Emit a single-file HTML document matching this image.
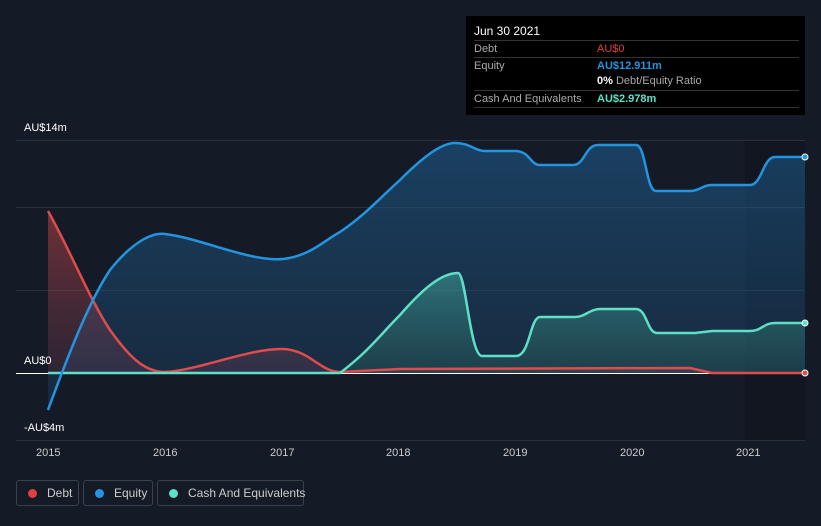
<!DOCTYPE html>
<html><head><style>
html,body{margin:0;width:821px;height:526px;overflow:hidden}
body{background:#151b26;font-family:"Liberation Sans",sans-serif;position:relative}
.t{position:absolute;font-size:11px;color:#fff}
.tip{position:absolute;left:466px;top:16px;width:339px;height:99px;background:#000;}
.tip .r{position:absolute;left:8px;right:6px;font-size:11px;color:#aaa;border-top:1px solid #333;height:16px;line-height:16px}
.leg{position:absolute;top:480px;height:26px;border:1px solid #3a404c;border-radius:3px;color:#ccc;font-size:12px;line-height:24px;box-sizing:border-box;white-space:nowrap}
.dot{display:inline-block;width:9px;height:9px;border-radius:50%;margin:0 10px 0 11px;vertical-align:-1px}
</style></head><body>
<svg width="821" height="526" style="position:absolute;left:0;top:0">
<defs>
<linearGradient id="eg" x1="0" y1="0" x2="0" y2="1"><stop offset="0" stop-color="#1e5f94" stop-opacity=".55"/><stop offset="1" stop-color="#1e4a72" stop-opacity=".3"/></linearGradient>
<linearGradient id="cg" x1="0" y1="0" x2="0" y2="1"><stop offset="0" stop-color="#4fd1b5" stop-opacity=".4"/><stop offset="1" stop-color="#2a6b64" stop-opacity=".3"/></linearGradient>
<linearGradient id="dg" x1="0" y1="0" x2="0" y2="1"><stop offset="0" stop-color="#e04b4b" stop-opacity=".45"/><stop offset="1" stop-color="#6a3a55" stop-opacity=".3"/></linearGradient>
</defs>
<rect x="745" y="140" width="60" height="300" fill="#0f141c" opacity=".6"/>
<g stroke="#2a303b" stroke-width="1">
<line x1="16" y1="140.5" x2="805" y2="140.5"/><line x1="16" y1="207.5" x2="805" y2="207.5"/><line x1="16" y1="290.5" x2="805" y2="290.5"/><line x1="16" y1="440.5" x2="805" y2="440.5"/>
</g>
<line x1="16" y1="373.5" x2="805" y2="373.5" stroke="#fff" stroke-width="1"/>
<path d="M48,410 C70,350 90,300 110,270 C130,245 150,232 165,234 C200,238 250,262 283,259 C310,256 325,240 340,232 C365,215 380,198 400,180 C420,160 440,143 455,143 C470,143 475,151 485,151 L515,151 C530,151 530,165 540,165 L573,165 C585,165 585,145 598,145 L636,145 C646,145 646,191 656,191 L690,191 C700,191 702,185 712,185 L750,185 C762,185 763,157 775,157 L805,157 L805,373 L48,373Z" fill="url(#eg)"/>
<path d="M48,211 C70,250 90,300 110,330 C130,358 145,372 165,372 C200,370 250,348 283,349 C310,350 320,372 340,372 L400,369 L690,368 L712,373 L805,373 L48,373Z" fill="url(#dg)"/>
<path d="M340,373 C370,350 380,335 400,315 C420,292 440,273 458,273 C466,273 470,356 482,356 L516,356 C530,356 530,317 540,317 L575,317 C585,317 590,309 600,309 L636,309 C647,309 647,333 657,333 L695,333 L712,331 L750,331 C762,331 763,323 775,323 L805,323 L805,373Z" fill="url(#cg)"/>
<path d="M48,211 C70,250 90,300 110,330 C130,358 145,372 165,372 C200,370 250,348 283,349 C310,350 320,372 340,372 L400,369 L690,368 L712,373 L805,373" fill="none" stroke="#e04b4b" stroke-width="2.5"/>
<path d="M48,373 L340,373 C370,350 380,335 400,315 C420,292 440,273 458,273 C466,273 470,356 482,356 L516,356 C530,356 530,317 540,317 L575,317 C585,317 590,309 600,309 L636,309 C647,309 647,333 657,333 L695,333 L712,331 L750,331 C762,331 763,323 775,323 L805,323" fill="none" stroke="#5ee0c8" stroke-width="2.5"/>
<path d="M48,410 C70,350 90,300 110,270 C130,245 150,232 165,234 C200,238 250,262 283,259 C310,256 325,240 340,232 C365,215 380,198 400,180 C420,160 440,143 455,143 C470,143 475,151 485,151 L515,151 C530,151 530,165 540,165 L573,165 C585,165 585,145 598,145 L636,145 C646,145 646,191 656,191 L690,191 C700,191 702,185 712,185 L750,185 C762,185 763,157 775,157 L805,157" fill="none" stroke="#2394e0" stroke-width="2.5"/>
<circle cx="805" cy="157" r="3" fill="#2394e0" stroke="#fff" stroke-width="1"/>
<circle cx="805" cy="323" r="3" fill="#5ee0c8" stroke="#fff" stroke-width="1"/>
<circle cx="805" cy="373" r="3" fill="#e04b4b" stroke="#fff" stroke-width="1"/>
</svg>
<div class="t" style="left:24px;top:122px">AU$14m</div>
<div class="t" style="left:24px;top:355px">AU$0</div>
<div class="t" style="left:24px;top:422px">-AU$4m</div>
<div class="t" style="left:36px;top:447px;color:#ccc">2015</div>
<div class="t" style="left:153px;top:447px;color:#ccc">2016</div>
<div class="t" style="left:270px;top:447px;color:#ccc">2017</div>
<div class="t" style="left:386px;top:447px;color:#ccc">2018</div>
<div class="t" style="left:503px;top:447px;color:#ccc">2019</div>
<div class="t" style="left:620px;top:447px;color:#ccc">2020</div>
<div class="t" style="left:736px;top:447px;color:#ccc">2021</div>
<div class="tip">
<div style="position:absolute;left:8px;top:8px;color:#fff;font-size:12px">Jun 30 2021</div>
<div class="r" style="top:24px">Debt<span style="position:absolute;left:123px;color:#e04040">AU$0</span></div>
<div class="r" style="top:41px">Equity<span style="position:absolute;left:123px;color:#2394e0;font-weight:bold">AU$12.911m</span></div>
<div class="r" style="top:57px;border:none"><span style="position:absolute;left:123px;color:#aaa"><b style="color:#fff">0%</b> Debt/Equity Ratio</span></div>
<div class="r" style="top:74px">Cash And Equivalents<span style="position:absolute;left:123px;color:#5ee0c8;font-weight:bold">AU$2.978m</span></div>
<div style="position:absolute;left:8px;right:6px;top:91px;border-top:1px solid #333"></div>
</div>
<div class="leg" style="left:16px;width:63px"><span class="dot" style="background:#e04040"></span>Debt</div>
<div class="leg" style="left:83px;width:70px"><span class="dot" style="background:#2394e0"></span>Equity</div>
<div class="leg" style="left:157px;width:147px"><span class="dot" style="background:#5ee0c8"></span>Cash And Equivalents</div>
</body></html>
